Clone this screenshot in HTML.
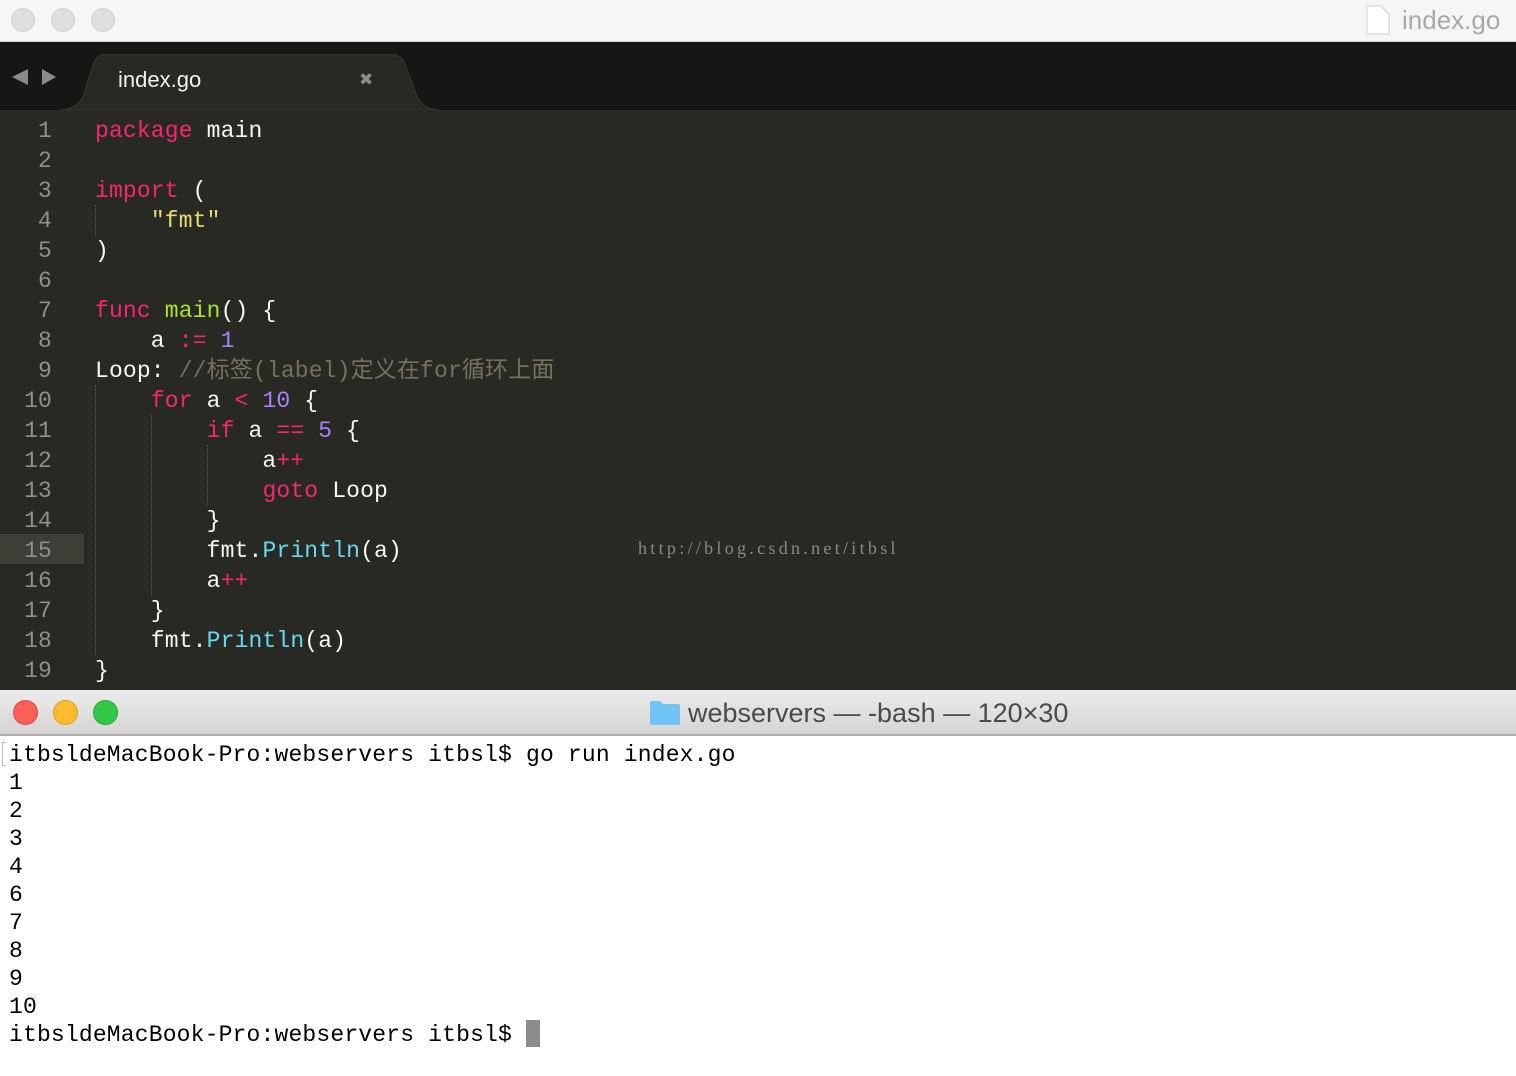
<!DOCTYPE html>
<html><head><meta charset="utf-8"><style>
*{margin:0;padding:0;box-sizing:border-box}
body{width:1516px;height:1076px;overflow:hidden;background:#fff;position:relative;font-family:"Liberation Sans",sans-serif}
.top{position:absolute;left:0;top:0;width:1516px;height:42px;background:#f6f6f6;border-bottom:1px solid #d6d6d6}
.dot{position:absolute;top:8px;width:24px;height:24px;border-radius:50%;background:#dedede;border:1px solid #d2d2d2}
.tabbar{position:absolute;left:0;top:42px;width:1516px;height:68px;background:#161614}
.code{position:absolute;left:0;top:110px;width:1516px;height:580px;background:#282923;overflow:hidden}
.ln,.cl{position:absolute;font-family:"Liberation Mono","Noto Sans CJK SC",monospace;font-size:23px;line-height:30px;white-space:pre;letter-spacing:0.15px}
.ln{color:#8f908a;width:52px;text-align:right;left:0}
.cl{left:95px;color:#f8f8f2}
.k{color:#f92672}.s{color:#e6db74}.n{color:#ae81ff}.f{color:#a6e22e}.b{color:#66d9ef}.c{color:#75715e}
.g{position:absolute;width:0;border-left:1px dotted #55564f}
.tt{position:absolute;left:0;top:690px;width:1516px;height:46px;background:linear-gradient(#ebebeb,#d5d5d5);border-bottom:2px solid #b0b0b0}
.term{position:absolute;left:9px;font-family:"Liberation Mono",monospace;font-size:23px;line-height:28px;color:#000;white-space:pre;letter-spacing:0.17px}
</style></head><body>
<div class="top">
<div class="dot" style="left:11px"></div><div class="dot" style="left:51px"></div><div class="dot" style="left:91px"></div>
<svg style="position:absolute;left:1366px;top:5px" width="24" height="30"><path d="M1 1H15L23 9V29H1Z" fill="#fff" stroke="#d0d0d0"/></svg>
<div style="position:absolute;left:1402px;top:5px;font-size:26px;color:#a8a8a8">index.go</div>
</div>
<div class="tabbar">
<svg style="position:absolute;left:12px;top:26px" width="50" height="20"><path d="M0 9L16 1V17Z" fill="#8a8a8a"/><path d="M44 9L30 1V17Z" fill="#8a8a8a"/></svg>
<svg style="position:absolute;left:60px;top:12px" width="380" height="56"><path d="M0 56Q18 56 24 40L34 8Q38 0 48 0H330Q340 0 344 8L356 40Q362 56 380 56Z" fill="#282923" stroke="#3a3a35"/></svg>
<div style="position:absolute;left:118px;top:25px;font-size:22px;color:#f0f0f0">index.go</div>
<div style="position:absolute;left:359px;top:28px;font-size:17px;color:#8a8a8a;font-family:'DejaVu Sans',sans-serif">✖</div>
</div>
<div class="code">
<div style="position:absolute;left:0;top:424px;width:84px;height:30px;background:#3e3d36"></div>
<div class="g" style="left:95px;top:95px;height:30px"></div>
<div class="g" style="left:95px;top:275px;height:270px"></div>
<div class="g" style="left:151px;top:305px;height:180px"></div>
<div class="g" style="left:207px;top:335px;height:60px"></div>
<div class="ln" style="top:6px">1<br>2<br>3<br>4<br>5<br>6<br>7<br>8<br>9<br>10<br>11<br>12<br>13<br>14<br>15<br>16<br>17<br>18<br>19<br>20</div>
<div class="cl" style="top:6px"><span class="k">package</span> main

<span class="k">import</span> (
    <span class="s">"fmt"</span>
)

<span class="k">func</span> <span class="f">main</span>() {
    a <span class="k">:=</span> <span class="n">1</span>
Loop: <span class="c">//标签(label)定义在for循环上面</span>
    <span class="k">for</span> a <span class="k">&lt;</span> <span class="n">10</span> {
        <span class="k">if</span> a <span class="k">==</span> <span class="n">5</span> {
            a<span class="k">++</span>
            <span class="k">goto</span> Loop
        }
        fmt.<span class="b">Println</span>(a)
        a<span class="k">++</span>
    }
    fmt.<span class="b">Println</span>(a)
}</div>
<div style="position:absolute;left:638px;top:428px;font-family:'Liberation Serif',serif;font-size:18px;color:#8a8a85;letter-spacing:3.3px">http://blog.csdn.net/itbsl</div>
</div>
<div class="tt">
<div style="position:absolute;left:13px;top:10px;width:25px;height:25px;border-radius:50%;background:#fc5f57;border:1px solid #de4a43"></div>
<div style="position:absolute;left:53px;top:10px;width:25px;height:25px;border-radius:50%;background:#fdbc2e;border:1px solid #dea123"></div>
<div style="position:absolute;left:93px;top:10px;width:25px;height:25px;border-radius:50%;background:#33c748;border:1px solid #27a83a"></div>
<svg style="position:absolute;left:649px;top:10px" width="32" height="26"><path d="M1 3Q1 1 3 1H11L14 4H29Q31 4 31 6V23Q31 25 29 25H3Q1 25 1 23Z" fill="#72c3f5"/></svg>
<div style="position:absolute;left:688px;top:8px;font-size:27px;color:#4a4a4a">webservers — -bash — 120×30</div>
</div>
<div class="term" style="top:741px">itbsldeMacBook-Pro:webservers itbsl$ go run index.go
1
2
3
4
6
7
8
9
10
itbsldeMacBook-Pro:webservers itbsl$ </div>
<div style="position:absolute;left:526px;top:1020px;width:14px;height:27px;background:#8c8c8c"></div>
<div style="position:absolute;left:2px;top:742px;width:4px;height:24px;border:1px solid #bbb;border-right:none"></div>
</body></html>
